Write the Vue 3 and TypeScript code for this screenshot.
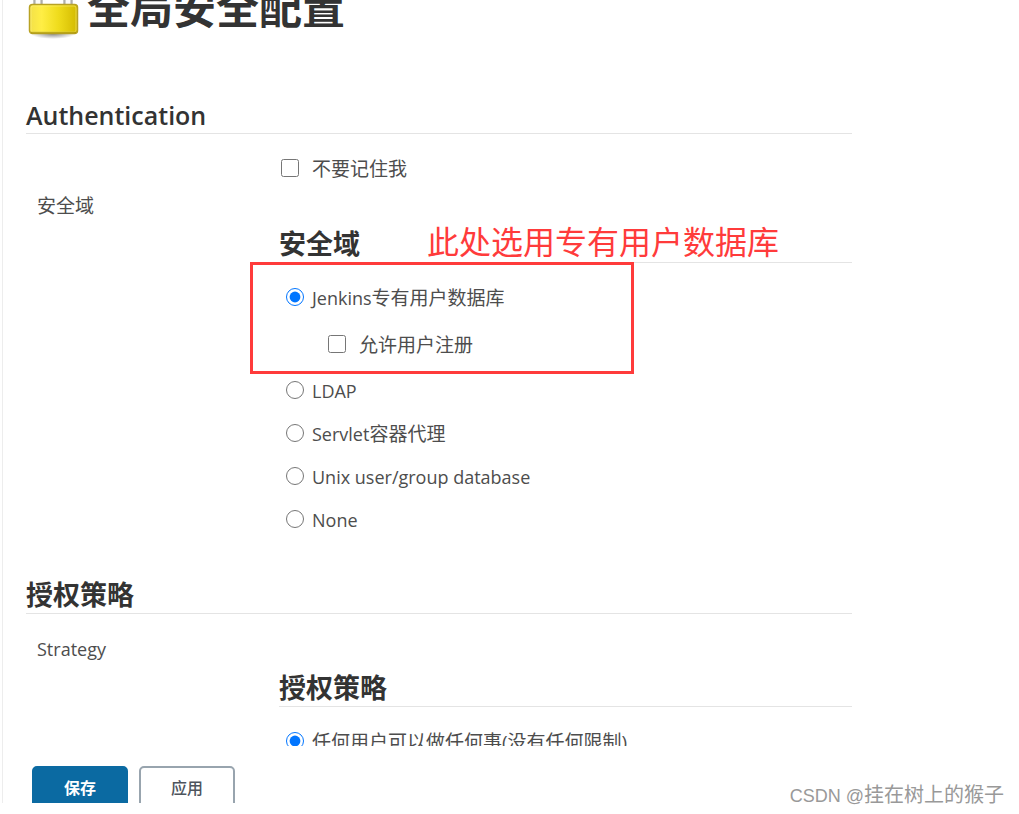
<script setup lang="ts">
import { ref } from 'vue'

interface Choice {
  value: string
  latin: string
  han?: string
}

const realms: Choice[] = [
  { value: 'ldap', latin: 'LDAP' },
  { value: 'servlet', latin: 'Servlet', han: '容器代理' },
  { value: 'unix', latin: 'Unix user/group database' },
  { value: 'none', latin: 'None' },
]

const realm = ref('jenkins')
const strategy = ref('anyone')
const disableRememberMe = ref(false)
const allowSignup = ref(false)
</script>

<template>
  <div class="page">
    <div class="frame">
      <main class="content">
        <header class="title">
          <svg class="lock" viewBox="0 0 54 72" aria-hidden="true">
            <defs>
              <linearGradient id="lock-body" x1="0" x2="1" y1="0" y2="0">
                <stop offset="0" stop-color="#f3e04a" />
                <stop offset="0.25" stop-color="#ffee45" />
                <stop offset="0.6" stop-color="#efdc1c" />
                <stop offset="1" stop-color="#d3ba00" />
              </linearGradient>
              <radialGradient id="lock-shadow">
                <stop offset="0" stop-color="#000" stop-opacity="0.45" />
                <stop offset="1" stop-color="#000" stop-opacity="0" />
              </radialGradient>
            </defs>
            <ellipse cx="27" cy="65" rx="22" ry="5" fill="url(#lock-shadow)" />
            <path d="M12 38V22a15 15 0 0 1 30 0v16" fill="none" stroke="#8d8d88" stroke-width="9" />
            <path d="M12 38V22a15 15 0 0 1 30 0v16" fill="none" stroke="#d0d0cc" stroke-width="7" />
            <path d="M12 38V22a15 15 0 0 1 30 0v16" fill="none" stroke="#fafaf8" stroke-width="4" />
            <rect x="3.500" y="35.500" width="48" height="29" rx="3" fill="url(#lock-body)" stroke="#b8a224" stroke-width="1.500" />
            <rect x="5" y="37" width="45" height="26" rx="2" fill="none" stroke="#fff38a" stroke-opacity="0.5" />
            <path d="M5 63.500h45" stroke="#a08a00" stroke-opacity="0.6" stroke-width="1.500" />
          </svg>
          <h1>全局安全配置</h1>
        </header>

        <section>
          <h2 class="latin">Authentication</h2>
          <div class="row remember">
            <label class="option check">
              <input v-model="disableRememberMe" type="checkbox" />
              <span>不要记住我</span>
            </label>
          </div>
          <div class="row">
            <div class="name">安全域</div>
            <div class="field" role="radiogroup" aria-labelledby="realm-title">
              <h3 id="realm-title">安全域</h3>
              <div class="mark-text">此处选用专有用户数据库</div>
              <div class="options">
                <label class="option">
                  <input v-model="realm" type="radio" name="realm" value="jenkins" />
                  <span><span class="latin">Jenkins</span>专有用户数据库</span>
                </label>
                <label class="option check nested">
                  <input v-model="allowSignup" type="checkbox" />
                  <span>允许用户注册</span>
                </label>
                <label v-for="item in realms" :key="item.value" class="option">
                  <input v-model="realm" type="radio" name="realm" :value="item.value" />
                  <span><span class="latin">{{ item.latin }}</span>{{ item.han }}</span>
                </label>
              </div>
              <div class="mark-box"></div>
            </div>
          </div>
        </section>

        <section>
          <h2>授权策略</h2>
          <div class="row strategy">
            <div class="name"><span class="latin">Strategy</span></div>
            <div class="field" role="radiogroup" aria-labelledby="strategy-title">
              <h3 id="strategy-title">授权策略</h3>
              <div class="options">
                <label class="option">
                  <input v-model="strategy" type="radio" name="strategy" value="anyone" />
                  <span>任何用户可以做任何事(没有任何限制)</span>
                </label>
              </div>
            </div>
          </div>
        </section>
      </main>

      <footer class="actions">
        <button type="button" class="save">保存</button>
        <button type="button" class="apply">应用</button>
      </footer>
    </div>
    <div class="watermark"><span class="latin">CSDN @</span>挂在树上的猴子</div>
  </div>
</template>

<style>
body {
  margin: 0;
  background: #fff;
}
</style>

<style scoped>
.page {
  position: relative;
  box-sizing: border-box;
  height: 100vh;
  padding: 0 0 11px 2px;
  overflow: hidden;
  font-family: "Open Sans", "Noto Sans CJK SC", sans-serif;
  font-size: 19px;
  line-height: 28px;
  color: #4d4d4d;
}

.frame {
  display: flex;
  flex-direction: column;
  box-sizing: border-box;
  height: 100%;
  border-left: 1px solid #ededed;
}

.content {
  flex: 1;
  min-height: 0;
  overflow: hidden;
  padding: 0 167px 0 23px;
}

.title {
  display: flex;
  align-items: flex-end;
  gap: 7px;
  height: 72px;
  margin-top: -31px;
  margin-bottom: 56px;
}

.lock {
  width: 54px;
  height: 72px;
}

h1,
h2,
h3 {
  margin: 0;
  color: #333;
}

h1 {
  font-size: 43px;
  line-height: 66px;
  font-weight: 700;
}

h2,
h3 {
  font-size: 27px;
  line-height: 36px;
  font-weight: 600;
  border-bottom: 1px solid #e4e4e4;
}

h2.latin {
  font-size: 25px;
}

span.latin {
  font-size: 18px;
}

section + section {
  margin-top: 43px;
}

.row {
  display: grid;
  grid-template-columns: 253px 1fr;
}

.remember {
  padding: 21px 0 9px;
}

.remember .option {
  grid-column: 2;
}

.strategy {
  padding-top: 21px;
}

.name {
  padding-left: 11px;
}

.field {
  position: relative;
  padding-top: 34px;
}

.strategy .field {
  padding-top: 35px;
}

.options {
  display: flex;
  flex-direction: column;
  gap: 15px;
  padding: 21px 0 0 7px;
}

.option {
  display: flex;
  align-items: center;
  gap: 8px;
}

.option input {
  width: 18px;
  height: 18px;
  margin: 0 0 3px;
}

.option > span {
  white-space: nowrap;
}

.check {
  gap: 13px;
  padding-left: 2px;
}

.nested {
  margin: 4px 0 3px;
  padding-left: 42px;
}

.mark-text {
  position: absolute;
  top: 27px;
  left: 148px;
  font-size: 32px;
  line-height: 46px;
  color: #ff3b3b;
  white-space: nowrap;
}

.mark-box {
  position: absolute;
  top: 70px;
  left: -29px;
  box-sizing: border-box;
  width: 384px;
  height: 112px;
  border: 3px solid #ff3b3b;
}

.actions {
  display: flex;
  gap: 11px;
  box-sizing: border-box;
  height: 57px;
  padding: 20px 0 0 29px;
  overflow: hidden;
}

.actions button {
  flex: none;
  box-sizing: border-box;
  width: 96px;
  height: 44px;
  padding: 0;
  border: 2px solid #0b6aa2;
  border-radius: 5px;
  font-family: inherit;
  font-size: 16px;
  line-height: 24px;
  font-weight: 700;
}

.actions .save {
  background: #0b6aa2;
  color: #fff;
}

.actions .apply {
  border-color: #98a4ae;
  background: #fff;
  color: #4d545d;
  font-weight: 500;
}

.watermark {
  position: absolute;
  right: 15px;
  bottom: 4px;
  font-family: "Liberation Sans", "Noto Sans CJK SC", sans-serif;
  font-size: 20px;
  color: #999;
}
</style>
